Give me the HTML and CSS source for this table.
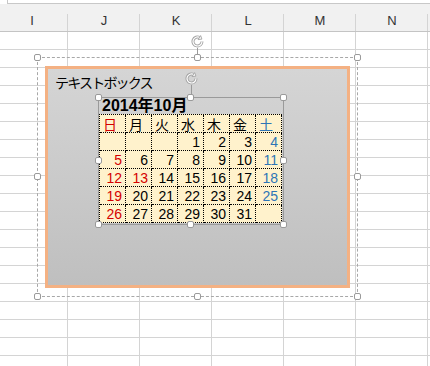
FILE: index.html
```html
<!DOCTYPE html>
<html lang="ja">
<head>
<meta charset="utf-8">
<title>Sheet</title>
<link rel="stylesheet" href="styles.css">
</head>
<body>
<div class="sheet">
  <div class="formula"></div>
  <div class="colheads">
    <div class="ch">I</div>
    <div class="ch">J</div>
    <div class="ch">K</div>
    <div class="ch">L</div>
    <div class="ch">M</div>
    <div class="ch">N</div>
    <div class="ch ch-rest"></div>
  </div>
  <div class="grid"></div>

  <div class="sel">
    <div class="rot">
      <svg width="13" height="13" viewBox="0 0 13 13">
        <path d="M11 6.5 A4.5 4.5 0 1 1 8.8 2.6" fill="none" stroke="#a3a3a3" stroke-width="3"/>
        <path d="M11 6.5 A4.5 4.5 0 1 1 8.8 2.6" fill="none" stroke="#fff" stroke-width="1.2"/>
        <path d="M10.9 4.1 L7.1 4.6 L9.6 0.6 Z" fill="#fff" stroke="#a3a3a3" stroke-width="0.9" stroke-linejoin="round"/>
      </svg>
      <div class="stem"></div>
    </div>
    <span class="h l t"></span><span class="h c t"></span><span class="h r t"></span>
    <span class="h l m"></span><span class="h r m"></span>
    <span class="h l b"></span><span class="h c b"></span><span class="h r b"></span>

    <div class="textbox">
      <p class="tb-text">テキストボックス</p>

      <div class="cal">
        <div class="rot rot-long">
          <svg width="13" height="13" viewBox="0 0 13 13">
            <path d="M11 6.5 A4.5 4.5 0 1 1 8.8 2.6" fill="none" stroke="#a3a3a3" stroke-width="3"/>
            <path d="M11 6.5 A4.5 4.5 0 1 1 8.8 2.6" fill="none" stroke="#fff" stroke-width="1.2"/>
            <path d="M10.9 4.1 L7.1 4.6 L9.6 0.6 Z" fill="#fff" stroke="#a3a3a3" stroke-width="0.9" stroke-linejoin="round"/>
          </svg>
          <div class="stem"></div>
        </div>
        <span class="h l t"></span><span class="h c t"></span><span class="h r t"></span>
        <span class="h l m"></span><span class="h r m"></span>
        <span class="h l b"></span><span class="h c b"></span><span class="h r b"></span>

        <div class="cal-title">2014年10月</div>
        <div class="cal-grid">
          <span class="hd sun">日</span><span class="hd">月</span><span class="hd">火</span><span class="hd">水</span><span class="hd">木</span><span class="hd">金</span><span class="hd sat">土</span>
          <span></span><span></span><span></span><span>1</span><span>2</span><span>3</span><span class="sat">4</span>
          <span class="sun">5</span><span>6</span><span>7</span><span>8</span><span>9</span><span>10</span><span class="sat">11</span>
          <span class="sun">12</span><span class="sun">13</span><span>14</span><span>15</span><span>16</span><span>17</span><span class="sat">18</span>
          <span class="sun">19</span><span>20</span><span>21</span><span>22</span><span>23</span><span>24</span><span class="sat">25</span>
          <span class="sun">26</span><span>27</span><span>28</span><span>29</span><span>30</span><span>31</span><span></span>
        </div>
      </div>
    </div>
  </div>
</div>
</body>
</html>
```

FILE: styles.css
```css
* {
  box-sizing: border-box;
  margin: 0;
  padding: 0;
}

html, body {
  width: 430px;
  height: 366px;
  overflow: hidden;
  background: #fff;
}

body {
  font-family: "Liberation Sans", Arial, sans-serif;
}

.sheet {
  position: relative;
  width: 430px;
  height: 366px;
  overflow: hidden;
}

.formula {
  height: 4px;
  margin-left: 7px;
  border-left: 1px solid #c8c8c8;
  border-bottom: 1px solid #c8c8c8;
}

.colheads {
  display: flex;
  margin-left: -4px;
  width: 434px;
  height: 28px;
  background: #f1f1f1;
  border-bottom: 1px solid #c4c4c4;
  overflow: hidden;
}

.ch {
  flex: 0 0 72px;
  position: relative;
  text-align: center;
  font-size: 13px;
  line-height: 20px;
  padding-top: 7px;
  color: #333;
}

.ch::after {
  content: "";
  position: absolute;
  right: 0;
  top: 10px;
  bottom: 0;
  width: 1px;
  background: #d4d4d4;
}

.ch-rest {
  flex: 1 1 0;
  min-width: 0;
}

.ch-rest::after {
  display: none;
}

.grid {
  height: 334px;
  background-image:
    linear-gradient(to right, transparent 71px, #d4d4d4 71px),
    linear-gradient(to bottom, transparent 17px, #d4d4d4 17px);
  background-size: 72px 100%, 100% 18px;
  background-position: -4px 0, 0 0;
}

/* selection frame of the text box */
.sel {
  position: absolute;
  left: 37px;
  top: 57px;
  width: 321px;
  height: 240px;
  border: 1px dashed #a8a8a8;
}

.h {
  position: absolute;
  width: 7px;
  height: 7px;
  background: #fff;
  border: 1px solid #9a9a9a;
  border-radius: 2px;
  z-index: 3;
}
.h.l { left: -4px; }
.h.c { left: calc(50% - 4px); }
.h.r { right: -4px; }
.h.t { top: -4px; }
.h.m { top: calc(50% - 4px); }
.h.b { bottom: -4px; }

.rot {
  position: absolute;
  left: calc(50% - 6.5px);
  bottom: calc(100% + 3px);
  width: 13px;
  display: flex;
  flex-direction: column;
  align-items: center;
  z-index: 3;
}
.rot svg {
  display: block;
}
.stem {
  width: 1px;
  height: 7px;
  background: #9a9a9a;
}
.rot-long .stem {
  height: 10px;
}

.textbox {
  position: relative;
  margin: 8px 0 0 7px;
  width: 305px;
  height: 222px;
  border: 3px solid #f4b183;
  background: linear-gradient(#d5d5d5, #bfbfbf);
}

.tb-text {
  font-family: "Noto Sans CJK JP", sans-serif;
  font-size: 14px;
  line-height: 18px;
  letter-spacing: -1.8px;
  padding: 4px 0 0 7px;
  color: #000;
}

/* calendar picture */
.cal {
  position: absolute;
  left: 50px;
  top: 28px;
  width: 186px;
  height: 128px;
  border: 1px solid #9a9a9a;
}

.cal-title {
  font-family: "Liberation Sans", "Noto Sans CJK JP", sans-serif;
  font-weight: bold;
  font-size: 16px;
  line-height: 16px;
  height: 16px;
  padding-left: 3px;
  color: #000;
}

.cal-grid {
  display: grid;
  grid-template-columns: repeat(7, 26px);
  grid-auto-rows: 18px;
  width: 183px;
  background: #fff2cc;
  border-top: 1px dotted #000;
  border-left: 1px dotted #000;
}

.cal-grid span {
  background: #fff2cc;
  border-right: 1px dotted #000;
  border-bottom: 1px dotted #000;
  font-family: "Liberation Sans", "Noto Sans CJK JP", sans-serif;
  font-size: 14px;
  line-height: 15px;
  padding: 2px 3px 0 0;
  text-align: right;
  color: #000;
}

.cal-grid .hd {
  font-family: "Noto Sans CJK JP", sans-serif;
  text-align: left;
  padding: 2px 0 0 3px;
}

.cal-grid .sun {
  color: #d40000;
}

.cal-grid .sat {
  color: #2e75b6;
}
```
